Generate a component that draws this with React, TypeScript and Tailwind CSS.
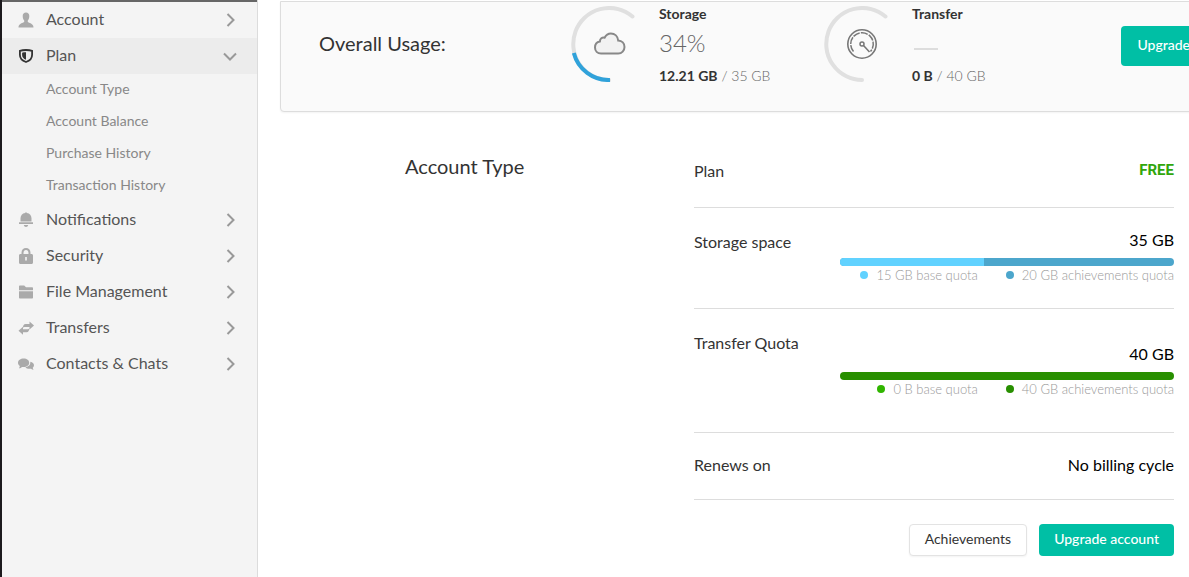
import type { ReactNode } from 'react';
import clsx from 'clsx';

interface NavItem {
  label: string;
  icon: ReactNode;
  open?: boolean;
  children?: string[];
}

const navItems: NavItem[] = [
  {
    label: 'Account',
    icon: (
      <path d="M8 0.5c2 0 3.3 1.4 3.3 3.4 0 2.3-.7 3.8-1.5 4.6v1.6c.9.9 5.7 1.4 5.7 5.4H.5c0-4 4.8-4.5 5.7-5.4V8.500C5.400 7.700 4.700 6.200 4.700 3.900 4.700 1.900 6 .5 8 .5z" />
    ),
  },
  {
    label: 'Plan',
    open: true,
    children: ['Account Type', 'Account Balance', 'Purchase History', 'Transaction History'],
    icon: (
      <>
        <path
          d="M8 2C5.500 2 3.500 2.300 1.900 2.900v3.800C1.900 10.300 4.200 12.700 8 14c3.800-1.300 6.100-3.700 6.100-7.300V2.900C12.500 2.300 10.500 2 8 2z"
          fill="none"
          stroke="currentColor"
          strokeWidth="1.8"
        />
        <path d="M8 4.300c-1.500 0-2.800.1-3.900.5v2C4.100 9.200 5.500 10.800 8 11.800z" />
      </>
    ),
  },
  {
    label: 'Notifications',
    icon: (
      <path d="M7.200 1a.8.8 0 0 1 1.600 0C11.800 1.400 13.500 3.600 13.500 6.300V9.500h-11V6.300C2.500 3.600 4.200 1.400 7.200 1zM1 10.300h14V12H1zM5.800 13h4.400c-.3 1.300-1 1.900-2.200 1.900s-1.900-.6-2.200-1.900z" />
    ),
  },
  {
    label: 'Security',
    icon: (
      <path
        fillRule="evenodd"
        d="M3.500 6V4.800C3.500 2 5.400 0 8 0s4.500 2 4.500 4.800V6h1c.9 0 1.500.6 1.500 1.500v7c0 .9-.6 1.500-1.500 1.500h-11C1.600 16 1 15.400 1 14.500v-7C1 6.600 1.600 6 2.500 6zm2 0h5V4.800C10.500 3.100 9.500 2 8 2S5.500 3.100 5.500 4.800zM7.200 9v3.500h1.600V9z"
      />
    ),
  },
  {
    label: 'File Management',
    icon: (
      <path d="M1 2.300c0-.5.3-.8.8-.8h4.400l1.800 1.800h6.200c.5 0 .8.300.8.800V6.200H1zM1 7.200h14v6.500c0 .5-.3.800-.8.800H1.800c-.5 0-.8-.3-.8-.8z" />
    ),
  },
  {
    label: 'Transfers',
    icon: (
      <path d="M11.500 1.500L16 5.500l-4.500 4V7H6.500c-.8 0-1.300.4-1.600 1C4.900 5.700 5.700 4 7.700 4h3.800zM5 6.800v2.400h4.700c.8 0 1.300-.4 1.600-1 0 2.300-.8 4-2.800 4H5v2.500L.5 10.700z" />
    ),
  },
  {
    label: 'Contacts & Chats',
    icon: (
      <path d="M5.700 2.500c3.200 0 5.500 1.800 5.500 4.300s-2.300 4.300-5.500 4.300c-.6 0-1.200-.1-1.700-.2-.8.8-1.700 1.300-3.100 1.300.6-.7.9-1.400.9-2.200C.6 9.200 0 8.100 0 6.800c0-2.500 2.500-4.300 5.700-4.300zM12.300 5.700c2.200.3 3.700 1.700 3.700 3.600 0 1-.4 1.800-1.200 2.500 0 .8.3 1.400.8 1.900-1.100 0-1.900-.4-2.600-1-2.400.5-4.500-.1-5.600-1.500 3.200-.5 5.300-2.600 4.900-5.500z" />
    ),
  },
];

function Chevron({ down }: { down?: boolean }) {
  return (
    <svg className="w-4 h-4 text-[#999]" viewBox="0 0 16 16" fill="none" stroke="currentColor" strokeWidth="2">
      <path d={down ? 'M2 5.500l6 6 6-6' : 'M5.500 2l6 6-6 6'} />
    </svg>
  );
}

function Sidebar() {
  return (
    <nav className="w-[258px] shrink-0 bg-[#f4f4f4] border-l-2 border-l-[#1c1a1d] border-r border-r-[#dcdcdc]">
      <div className="h-0.5 bg-[#666]" />
      {navItems.map((item) => (
        <div key={item.label}>
          <button
            className={clsx(
              'w-full h-9 pl-4 pr-[19px] flex items-center text-base text-[#555]',
              item.open && 'bg-[#ececec]'
            )}
          >
            <svg
              className={clsx('w-4 h-4 mr-3', item.open ? 'text-[#333]' : 'text-[#aaa]')}
              viewBox="0 0 16 16"
              fill="currentColor"
            >
              {item.icon}
            </svg>
            <span className="flex-1 pb-0.5 text-left">{item.label}</span>
            <Chevron down={item.open} />
          </button>
          {item.children && (
            <ul className="pl-11 text-sm text-[#888]">
              {item.children.map((child) => (
                <li key={child}>
                  <a href="#" className="h-8 pb-0.5 flex items-center">{child}</a>
                </li>
              ))}
            </ul>
          )}
        </div>
      ))}
    </nav>
  );
}

interface UsageProps {
  title: string;
  used: string;
  total: string;
  percent: ReactNode;
  ring: ReactNode;
}

function Usage({ title, used, total, percent, ring }: UsageProps) {
  return (
    <div className="w-[253px] flex shrink-0">
      <svg className="w-[76px] h-[76px] mt-1 mr-3" viewBox="0 0 76 76" fill="none">
        <path d="M61.500 10.500A36 36 0 1 0 38 74" stroke="#e0e0e0" strokeWidth="4" strokeLinecap="round" />
        {ring}
      </svg>
      <div>
        <h3 className="text-sm leading-6 font-bold text-[#333]">{title}</h3>
        <div className="h-[34px] flex items-center text-2xl font-light text-[#666]">{percent}</div>
        <p className="text-sm leading-8 font-light text-[#666]">
          <strong className="font-bold text-[#333]">{used}</strong> / {total}
        </p>
      </div>
    </div>
  );
}

const storageRing = (
  <>
    <path d="M2.800 47A36 36 0 0 0 39 74" stroke="#30a2da" strokeWidth="4" />
    <path
      d="M30 47.500c-3.500 0-6-2.600-6-6.100 0-3.100 2-5.500 4.900-6 0-2.700 2.200-4.300 4.700-3.700 1.400-2.800 3.600-4.200 6.300-4.200 3.900 0 6.900 2.800 7.300 7 3.800.3 6.300 2.900 6.300 6.500s-2.700 6.500-6.300 6.500z"
      fill="#f2f2f2"
      stroke="#888"
      strokeWidth="2"
    />
  </>
);

const transferRing = (
  <g stroke="#777">
    <circle cx="38" cy="38" r="14.2" strokeWidth="1.6" />
    <path d="M29.500 45.500a11.300 11.300 0 1 1 17 0" strokeWidth="1.5" strokeDasharray="7 1.200" />
    <circle cx="38" cy="38" r="2" strokeWidth="1.5" />
    <path d="M39.500 39.500l6 6.500" strokeWidth="1.6" />
  </g>
);

interface QuotaProps {
  total: string;
  base: string;
  achievements: string;
  baseColor: string;
  achievementsColor: string;
  baseShare: number;
}

function Quota({ total, base, achievements, baseColor, achievementsColor, baseShare }: QuotaProps) {
  return (
    <dd className="w-[334px] text-right">
      <div className="leading-6 text-black">{total}</div>
      <div className={clsx('h-2 mt-1.5 rounded-full overflow-hidden', achievementsColor)}>
        <div className={clsx('h-full', baseColor)} style={{ width: `${baseShare}%` }} />
      </div>
      <div className="flex justify-end gap-7 text-[13px] leading-[18px] font-light text-[#999]">
        <span className="flex items-center gap-2">
          <i className={clsx('w-2 h-2 rounded-full', baseColor)} />
          {base} base quota
        </span>
        <span className="flex items-center gap-2">
          <i className={clsx('w-2 h-2 rounded-full', achievementsColor)} />
          {achievements} achievements quota
        </span>
      </div>
    </dd>
  );
}

export default function App() {
  return (
    <div className="min-h-screen flex bg-white font-['Lato',sans-serif] text-[#333]">
      <Sidebar />
      <main className="flex-1 min-w-0 overflow-hidden pl-[22px] pt-px">
        <section className="-mr-12 h-[111px] pl-[38px] pr-[30px] flex border border-[#ddd] rounded-b bg-[#fafafa] shadow-xs">
          <h2 className="w-[252px] shrink-0 pt-7 text-xl leading-[26px]">Overall Usage:</h2>
          <Usage
            title="Storage"
            used="12.21 GB"
            total="35 GB"
            percent="34%"
            ring={storageRing}
          />
          <Usage
            title="Transfer"
            used="0 B"
            total="40 GB"
            percent={<span className="w-6 ml-0.5 mt-3 border-t-2 border-[#ddd]" />}
            ring={transferRing}
          />
          <button className="ml-auto mt-6 h-10 px-4 pb-0.5 rounded bg-[#00bfa5] text-sm font-medium text-white">
            Upgrade
          </button>
        </section>

        <section className="mt-6 pl-[125px] pr-[15px] flex">
          <h2 className="w-[289px] shrink-0 pt-4 text-xl">Account Type</h2>
          <div className="flex-1">
            <dl className="text-base">
              <div className="h-[72px] pb-0.5 flex items-center justify-between border-b border-[#ddd]">
                <dt>Plan</dt>
                <dd className="font-['Roboto',sans-serif] text-[15px] font-bold text-[#31a60b]">FREE</dd>
              </div>
              <div className="h-[101px] pt-5 flex justify-between border-b border-[#ddd]">
                <dt className="pt-0.5">Storage space</dt>
                <Quota
                  total="35 GB"
                  base="15 GB"
                  achievements="20 GB"
                  baseColor="bg-[#61d2ff]"
                  achievementsColor="bg-[#4ca6cc]"
                  baseShare={43}
                />
              </div>
              <div className="h-[124px] pt-[22px] flex justify-between border-b border-[#ddd]">
                <dt>Transfer Quota</dt>
                <div className="pt-[11px]">
                  <Quota
                    total="40 GB"
                    base="0 B"
                    achievements="40 GB"
                    baseColor="bg-[#31b500]"
                    achievementsColor="bg-[#288f00]"
                    baseShare={0}
                  />
                </div>
              </div>
              <div className="h-[67px] pb-0.5 flex items-center justify-between border-b border-[#ddd]">
                <dt>Renews on</dt>
                <dd className="text-black">No billing cycle</dd>
              </div>
            </dl>
            <div className="mt-6 flex justify-end gap-3 text-sm">
              <button className="h-8 px-[15px] pb-0.5 rounded border border-[#e3e3e3] bg-white shadow-xs">
                Achievements
              </button>
              <button className="h-8 px-[15px] pb-0.5 rounded bg-[#00bfa5] font-medium text-white">
                Upgrade account
              </button>
            </div>
          </div>
        </section>
      </main>
    </div>
  );
}
